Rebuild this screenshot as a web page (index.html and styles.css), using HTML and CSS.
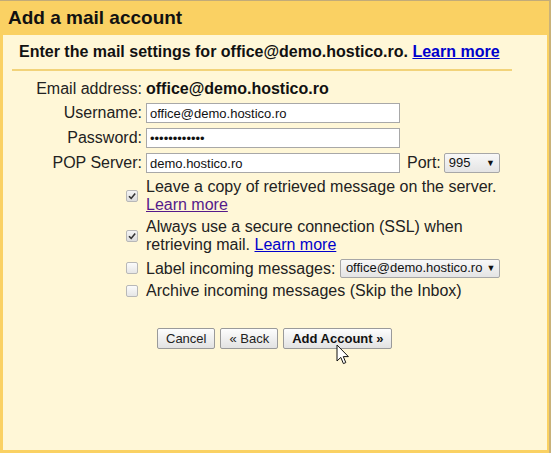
FILE: index.html
```html
<!DOCTYPE html>
<html>
<head>
<meta charset="utf-8">
<link rel="stylesheet" href="styles.css">
</head>
<body>
<div class="frame">
  <h1 class="title">Add a mail account</h1>
  <div class="panel">
    <div class="intro">Enter the mail settings for office@demo.hostico.ro. <a class="link" href="#">Learn more</a></div>
    <div class="rule"></div>
    <div class="form">
      <div class="label first">Email address:</div>
      <div class="value first strong">office@demo.hostico.ro</div>

      <div class="label">Username:</div>
      <div class="value"><input class="field" type="text" value="office@demo.hostico.ro"></div>

      <div class="label">Password:</div>
      <div class="value"><input class="field" type="password" value="hostico12345"></div>

      <div class="label">POP Server:</div>
      <div class="value server-row">
        <input class="field" type="text" value="demo.hostico.ro">
        <span class="port-label">Port:</span>
        <span class="select port-select">995<span class="arrow">▼</span></span>
      </div>
    </div>

    <div class="options">
      <div class="opt">
        <span class="box checked"><svg viewBox="0 0 10 10" width="10" height="10"><path d="M2 5.2 L4.2 7.4 L8.2 2.6" fill="none" stroke="#333" stroke-width="1.6"/></svg></span>
        <span class="opt-text">Leave a copy of retrieved message on the server.<br><a class="link visited" href="#">Learn more</a></span>
      </div>
      <div class="opt">
        <span class="box checked"><svg viewBox="0 0 10 10" width="10" height="10"><path d="M2 5.2 L4.2 7.4 L8.2 2.6" fill="none" stroke="#333" stroke-width="1.6"/></svg></span>
        <span class="opt-text">Always use a secure connection (SSL) when<br>retrieving mail. <a class="link" href="#">Learn more</a></span>
      </div>
      <div class="opt single tall">
        <span class="box"></span>
        <span class="opt-text">Label incoming messages: <span class="select label-select">office@demo.hostico.ro<span class="arrow">▼</span></span></span>
      </div>
      <div class="opt single">
        <span class="box"></span>
        <span class="opt-text">Archive incoming messages (Skip the Inbox)</span>
      </div>
    </div>

    <div class="buttons">
      <button class="btn">Cancel</button>
      <button class="btn">« Back</button>
      <button class="btn primary">Add Account »</button>
      <svg class="cursor" width="14" height="22" viewBox="0 0 14 22"><path d="M1 1 L1 17 L4.8 13.4 L7.4 19.6 L9.8 18.6 L7.3 12.6 L12.4 12.6 Z" fill="#fff" stroke="#111" stroke-width="1"/></svg>
    </div>
  </div>
</div>
</body>
</html>
```
FILE: styles.css
```css
html, body {
  margin: 0;
  padding: 0;
}
body {
  width: 551px;
  height: 453px;
  overflow: hidden;
  font-family: "Liberation Sans", Arial, sans-serif;
  color: #222;
}
.frame {
  box-sizing: border-box;
  width: 551px;
  height: 453px;
  background: #fad163;
  border-top: 1px solid #c2ab78;
  border-right: 2px solid #c9b27a;
  display: flex;
  flex-direction: column;
}
.title {
  margin: 0;
  height: 34px;
  box-sizing: border-box;
  padding: 5px 0 0 8px;
  font-size: 19px;
  font-weight: bold;
  color: #111;
  line-height: 24px;
}
.panel {
  background: #fff7d7;
  margin: 0 2px 3px 3px;
  flex: 1;
  position: relative;
}
.intro {
  font-size: 16px;
  font-weight: bold;
  color: #111;
  padding: 8px 0 0 16px;
  line-height: 18px;
}
.link {
  color: #0000cc;
  text-decoration: underline;
}
.link.visited {
  color: #551a8b;
}
.rule {
  height: 2px;
  background: #f2d37a;
  margin: 8px 35px 0 9px;
}
.form {
  display: grid;
  grid-template-columns: 139px 1fr;
  column-gap: 4px;
  row-gap: 5px;
  margin-top: 9px;
  font-size: 16px;
  color: #222;
}
.label {
  text-align: right;
  line-height: 20px;
}
.value {
  line-height: 20px;
  display: flex;
  align-items: center;
}
.label.first, .value.first {
  line-height: 18px;
}
.strong {
  font-weight: bold;
  color: #111;
}
.field {
  box-sizing: border-box;
  width: 254px;
  height: 20px;
  border: 1px solid #a8a8a8;
  background: #fff;
  padding: 0 3px;
  margin: 0;
  font-family: "Liberation Sans", Arial, sans-serif;
  font-size: 13px;
  color: #111;
  outline: none;
}
.server-row .port-label {
  margin-left: 7px;
}
.select {
  box-sizing: border-box;
  height: 20px;
  border: 1px solid #a7a7a7;
  border-radius: 2px;
  background: linear-gradient(#f8f8f8, #e4e4e4);
  font-size: 13px;
  color: #111;
  display: inline-flex;
  align-items: center;
  padding: 0 4px 0 4px;
  line-height: 18px;
}
.arrow {
  font-size: 9px;
  margin-left: 6px;
}
.port-select {
  width: 56px;
  margin-left: 3px;
  justify-content: space-between;
}
.options {
  margin-top: 5px;
  padding-left: 123px;
  font-size: 16px;
  color: #222;
  display: flex;
  flex-direction: column;
  gap: 4px;
}
.opt {
  display: flex;
  align-items: center;
  line-height: 18px;
}
.opt.tall {
  min-height: 20px;
}
.opt-text {
  margin-left: 8px;
}
.box {
  box-sizing: border-box;
  width: 12px;
  height: 12px;
  border: 1px solid #b8b8b8;
  border-radius: 2px;
  background: linear-gradient(#fbfbfb, #e6e6e6);
  display: inline-flex;
  align-items: center;
  justify-content: center;
  flex: none;
}
.box.checked {
  background: linear-gradient(#f4f4f4, #dcdcdc);
}
.label-select {
  height: 19px;
  padding: 0 4px 0 5px;
  vertical-align: 1px;
}
.label-select .arrow {
  margin-left: 4px;
}
.buttons {
  display: flex;
  gap: 5px;
  margin-top: 28px;
  padding-left: 154px;
  position: relative;
}
.btn {
  box-sizing: border-box;
  height: 21px;
  border: 1px solid #9a9a9a;
  border-radius: 2px;
  background: linear-gradient(#fdfdfd, #e2e2e2);
  font-family: "Liberation Sans", Arial, sans-serif;
  font-size: 13px;
  color: #222;
  padding: 0 8px;
  margin: 0;
}
.btn.primary {
  font-weight: bold;
  color: #111;
}
.cursor {
  position: absolute;
  left: 333px;
  top: 16px;
}
```
